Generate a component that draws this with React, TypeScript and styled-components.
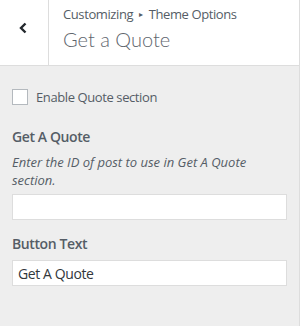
import React, { useState } from "react";
import styled, { createGlobalStyle } from "styled-components";

const GlobalStyle = createGlobalStyle`
  html, body {
    margin: 0;
    padding: 0;
    background: #eee;
  }
  body {
    font-family: "Open Sans", "Noto Sans", Arial, sans-serif;
    color: #555d66;
    letter-spacing: -0.4px;
  }
`;

const App = () => {
  const [enabled, setEnabled] = useState(false);
  const [postId, setPostId] = useState("");
  const [buttonText, setButtonText] = useState("Get A Quote");

  return (
    <Panel>
      <GlobalStyle />
      <Header>
        <BackButton aria-label="Back">
          <svg width="12" height="14" viewBox="0 0 12 14">
            <path
              d="M8.5 2.5 L4 7 L8.5 11.5"
              fill="none"
              stroke="#23282d"
              strokeWidth="2.4"
            />
          </svg>
        </BackButton>
        <TitleBlock>
          <Breadcrumb>
            Customizing <Arrow>▸</Arrow> Theme Options
          </Breadcrumb>
          <SectionTitle>Get a Quote</SectionTitle>
        </TitleBlock>
      </Header>
      <Controls>
        <CheckboxRow>
          <Checkbox
            type="checkbox"
            checked={enabled}
            onChange={() => setEnabled(!enabled)}
          />
          Enable Quote section
        </CheckboxRow>
        <Control>
          <ControlTitle>Get A Quote</ControlTitle>
          <Description>
            Enter the ID of post to use in Get A Quote section.
          </Description>
          <TextInput
            value={postId}
            onChange={(event: React.FormEvent<HTMLInputElement>) =>
              setPostId(event.currentTarget.value)
            }
          />
        </Control>
        <Control>
          <ControlTitle>Button Text</ControlTitle>
          <TextInput
            value={buttonText}
            onChange={(event: React.FormEvent<HTMLInputElement>) =>
              setButtonText(event.currentTarget.value)
            }
          />
        </Control>
      </Controls>
    </Panel>
  );
};
export default App;

const Panel = styled.div`
  width: 299px;
  height: 326px;
  background: #eee;
  border-right: 1px solid #ddd;
  overflow: hidden;
`;
const Header = styled.div`
  display: flex;
  height: 65px;
  background: #fff;
  border-bottom: 1px solid #ddd;
`;
const BackButton = styled.button`
  width: 49px;
  flex: none;
  display: flex;
  align-items: flex-start;
  justify-content: center;
  border: 0;
  border-right: 1px solid #ddd;
  background: #fff;
  padding: 21px 2px 0 0;
  cursor: pointer;
`;
const TitleBlock = styled.div`
  padding: 2px 10px 0 14px;
`;
const Breadcrumb = styled.span`
  display: block;
  font-size: 13px;
  line-height: 24px;
`;
const Arrow = styled.span`
  font-size: 8px;
  margin: 0 3px;
  vertical-align: 2px;
`;
const SectionTitle = styled.h3`
  margin: 0;
  font-family: Lato, "Open Sans", sans-serif;
  font-size: 20px;
  font-weight: 300;
  letter-spacing: 0;
  line-height: 26px;
  color: #5f666e;
`;
const Controls = styled.div`
  padding: 22px 12px 0 12px;
`;
const CheckboxRow = styled.label`
  display: flex;
  align-items: center;
  gap: 8px;
  font-size: 13px;
  line-height: 18px;
  margin-bottom: 19px;
`;
const Checkbox = styled.input`
  appearance: none;
  width: 16px;
  height: 16px;
  margin: 0;
  background: #fff;
  border: 1px solid #b4b9be;
  box-sizing: border-box;
`;
const Control = styled.div`
  & + & {
    margin-top: 12px;
  }
`;
const ControlTitle = styled.span`
  display: block;
  font-size: 14px;
  font-weight: 600;
  line-height: 24px;
  margin-bottom: 4px;
`;
const Description = styled.span`
  display: block;
  font-size: 13px;
  font-style: italic;
  letter-spacing: 0;
  line-height: 18px;
  margin-bottom: 5px;
`;
const TextInput = styled.input`
  display: block;
  width: 100%;
  height: 26px;
  box-sizing: border-box;
  margin: 0;
  padding: 0 5px;
  border: 1px solid #ddd;
  background: #fff;
  font-family: inherit;
  font-size: 14px;
  letter-spacing: -0.4px;
  color: #32373c;
  outline: none;
`;
